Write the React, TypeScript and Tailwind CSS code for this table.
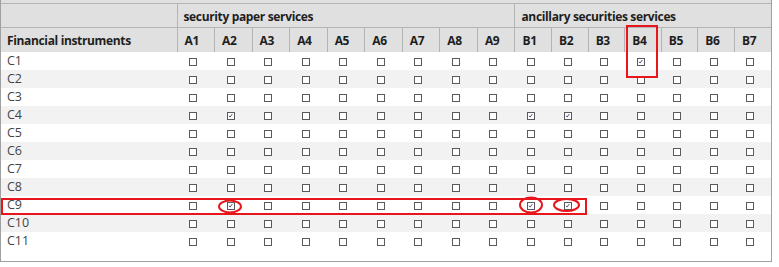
import React from "react";

const aCols = ["A1", "A2", "A3", "A4", "A5", "A6", "A7", "A8", "A9"];
const bCols = ["B1", "B2", "B3", "B4", "B5", "B6", "B7"];
const cols = [...aCols, ...bCols];
const rows = ["C1", "C2", "C3", "C4", "C5", "C6", "C7", "C8", "C9", "C10", "C11"];

// zugeordnete Kombinationen
const checked: Record<string, string[]> = {
  C1: ["B4"],
  C4: ["A2", "B1", "B2"],
  C9: ["A2", "B1", "B2"],
};

function Box({ on }: { on: boolean }) {
  return (
    <span className="relative inline-block h-[8px] w-[8px] border border-[#5a5a5a] bg-white align-middle">
      {on && (
        <svg viewBox="0 0 8 8" className="absolute left-0 top-0 h-[6px] w-[6px]">
          <path d="M1.2 3.8 L2.8 5.3 L5.8 1.4" fill="none" stroke="#34466b" strokeWidth="1.2" />
        </svg>
      )}
    </span>
  );
}

export default function App() {
  return (
    <div className="relative h-[267px] w-[779px] bg-white font-['Open_Sans',sans-serif]">
      <div className="h-[262px] w-[772px] border-x border-b border-[#a0a0a0] bg-white">
        <div className="h-[3px] bg-[#e0e0e0]" />
        <table className="w-[770px] table-fixed border-collapse text-[12px]">
          <colgroup>
            <col className="w-[176px]" />
            {aCols.map((c) => (
              <col key={c} className="w-[37.55px]" />
            ))}
            {bCols.map((c) => (
              <col key={c} className="w-[36.58px]" />
            ))}
          </colgroup>
          <thead className="bg-[#e0e0e0] font-bold tracking-[-0.35px] text-[#1e1e1e]">
            <tr className="h-[24px] border-t border-[#b4b4b4]">
              <th className="border-b border-r border-[#b4b4b4]" />
              <th colSpan={9} className="border-b border-r border-[#b4b4b4] px-[6px] pt-[3px] text-left">
                security paper services
              </th>
              <th colSpan={7} className="border-b border-[#b4b4b4] px-[6px] pt-[3px] text-left">
                ancillary securities services
              </th>
            </tr>
            <tr className="h-[24px]">
              <th className="border-r border-[#b4b4b4] px-[6px] pt-[3px] text-left">
                Financial instruments
              </th>
              {cols.map((c, i) => (
                <th
                  key={c}
                  className={`px-[7px] pt-[3px] text-left ${i < cols.length - 1 ? "border-r border-[#b4b4b4]" : ""}`}
                >
                  {c}
                </th>
              ))}
            </tr>
          </thead>
          <tbody className="text-[12.5px] text-[#444]">
            {rows.map((r, ri) => (
              <tr key={r} className={`h-[18px] ${ri % 2 === 1 ? "bg-[#f2f2f2]" : "bg-white"}`}>
                <td className="px-[6px] leading-[18px]">{r}</td>
                {cols.map((c) => (
                  <td key={c} className="pl-[12px] pt-[2px] leading-[16px]">
                    <Box on={(checked[r] ?? []).includes(c)} />
                  </td>
                ))}
              </tr>
            ))}
          </tbody>
        </table>
      </div>

      {/* Markierungen */}
      <svg className="pointer-events-none absolute left-0 top-0" width="779" height="267">
        <rect x="627" y="26" width="30" height="51" fill="none" stroke="#e8151b" strokeWidth="2" />
        <rect x="2" y="199" width="584" height="15" fill="none" stroke="#e8151b" strokeWidth="2" />
        <ellipse cx="230" cy="206.5" rx="11" ry="6" fill="none" stroke="#e8151b" strokeWidth="2" />
        <ellipse cx="531" cy="205" rx="11" ry="7.5" fill="none" stroke="#e8151b" strokeWidth="2" />
        <ellipse cx="566.5" cy="205" rx="12.5" ry="6" fill="none" stroke="#e8151b" strokeWidth="2" />
      </svg>
    </div>
  );
}
